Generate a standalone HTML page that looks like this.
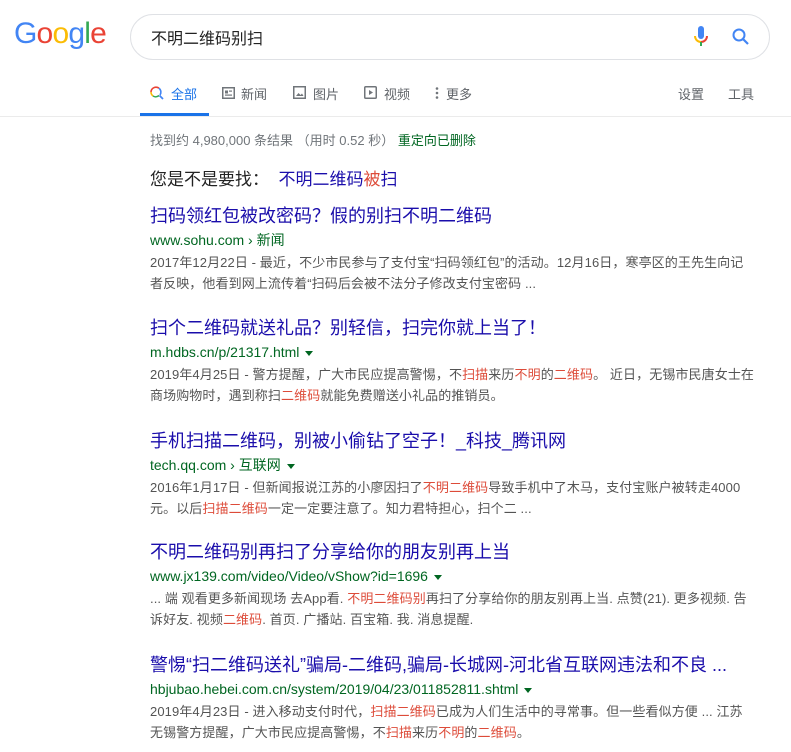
<!DOCTYPE html>
<html><head><meta charset="utf-8"><style>
body{margin:0;width:791px;height:752px;overflow:hidden;background:#fff;font-family:"Liberation Sans","Noto Sans CJK SC",sans-serif;position:relative}
.a{position:absolute;white-space:nowrap}
.logo{left:14px;top:17px;font-size:30px;letter-spacing:-0.8px;font-family:"Liberation Sans",sans-serif}
.box{position:absolute;left:130px;top:14px;width:638px;height:44px;border:1px solid #dfe1e5;border-radius:24px}
.nav{top:84px;font-size:13px;color:#5f6368}
.r{position:absolute;left:150px}
.t{font-size:18px;color:#1a0dab;line-height:22px}
.u{font-size:14px;color:#006621;line-height:20px;margin-top:3px}
.s{font-size:13px;color:#545454;line-height:21px;margin-top:2px;letter-spacing:0.1px}
em{font-style:normal;color:#dd4b39}
.tri{display:inline-block;width:0;height:0;border-left:4px solid transparent;border-right:4px solid transparent;border-top:5px solid #006621;margin-left:6px;vertical-align:middle}
</style></head><body>
<div class="a logo"><span style="color:#4285f4">G</span><span style="color:#ea4335">o</span><span style="color:#fbbc05">o</span><span style="color:#4285f4">g</span><span style="color:#34a853">l</span><span style="color:#ea4335">e</span></div>
<div class="box"></div>
<div class="a" style="left:151px;top:25px;font-size:16px;color:#222">不明二维码别扫</div>
<svg class="a" style="left:692px;top:25px" width="18" height="24" viewBox="0 0 18 24"><rect x="6" y="1" width="6" height="13" rx="3" fill="#4285f4"/><path d="M3 11a6 6 0 0 0 6 6" stroke="#fbbc05" stroke-width="2" fill="none"/><path d="M15 11a6 6 0 0 1-6 6" stroke="#ea4335" stroke-width="2" fill="none"/><rect x="8" y="17" width="2" height="4" fill="#34a853"/></svg>
<svg class="a" style="left:731px;top:27px" width="20" height="20" viewBox="0 0 20 20"><circle cx="8" cy="8" r="5.5" stroke="#4285f4" stroke-width="2" fill="none"/><path d="M12 12l5 5" stroke="#4285f4" stroke-width="2.2"/></svg>
<svg class="a" style="left:150px;top:86px" width="14" height="14" viewBox="0 0 14 14"><path d="M9 2.2A5 5 0 0 0 1 6" stroke="#ea4335" stroke-width="1.6" fill="none"/><path d="M1 6a5 5 0 0 0 2 4" stroke="#fbbc05" stroke-width="1.6" fill="none"/><path d="M3 10a5 5 0 0 0 6-0.5" stroke="#34a853" stroke-width="1.6" fill="none"/><path d="M9 2.2A5 5 0 0 1 10 9" stroke="#4285f4" stroke-width="1.6" fill="none"/><path d="M9.5 9.5l3.5 3.5" stroke="#4285f4" stroke-width="1.8"/></svg>
<div class="a nav" style="left:171px;color:#1a73e8">全部</div>
<div style="position:absolute;left:140px;top:113px;width:69px;height:3px;background:#1a73e8"></div>
<svg class="a" style="left:222px;top:87px" width="13" height="12"><rect x="0.75" y="0.75" width="11.5" height="10.5" fill="none" stroke="#70757a" stroke-width="1.5"/><rect x="3" y="3.5" width="3" height="3" fill="#70757a"/><rect x="7" y="3.5" width="3" height="1.2" fill="#70757a"/><rect x="3" y="7.5" width="7" height="1.2" fill="#70757a"/></svg>
<div class="a nav" style="left:241px">新闻</div>
<svg class="a" style="left:293px;top:86px" width="13" height="13"><rect x="0.75" y="0.75" width="11.5" height="11.5" fill="none" stroke="#70757a" stroke-width="1.5"/><path d="M3 10l2.5-3 2 2 1.5-1.5 1.5 2.5z" fill="#70757a"/></svg>
<div class="a nav" style="left:313px">图片</div>
<svg class="a" style="left:364px;top:86px" width="13" height="13"><rect x="0.75" y="0.75" width="11.5" height="11.5" fill="none" stroke="#70757a" stroke-width="1.5" rx="1"/><path d="M5 4l4 2.5-4 2.5z" fill="#70757a"/></svg>
<div class="a nav" style="left:384px">视频</div>
<svg class="a" style="left:435px;top:87px" width="4" height="12"><circle cx="2" cy="1.5" r="1.3" fill="#70757a"/><circle cx="2" cy="6" r="1.3" fill="#70757a"/><circle cx="2" cy="10.5" r="1.3" fill="#70757a"/></svg>
<div class="a nav" style="left:446px">更多</div>
<div class="a nav" style="left:678px">设置</div>
<div class="a nav" style="left:728px">工具</div>
<div style="position:absolute;left:0;top:116px;width:791px;height:1px;background:#ebebeb"></div>
<div class="a" style="left:150px;top:130px;font-size:13px;color:#70757a">找到约 4,980,000 条结果 （用时 0.52 秒） <span style="color:#006621">重定向已删除</span></div>
<div class="a" style="left:150px;top:165px;font-size:17px;color:#222">您是不是要找：&nbsp;&nbsp;<span style="color:#1a0dab">不明二维码<em style="color:#dd4b39">被</em>扫</span></div>

<div class="r" style="top:205px"><div class="t">扫码领红包被改密码？假的别扫不明二维码</div><div class="u">www.sohu.com › 新闻</div><div class="s">2017年12月22日 - 最近，不少市民参与了支付宝“扫码领红包”的活动。12月16日，寒亭区的王先生向记<br>者反映，他看到网上流传着“扫码后会被不法分子修改支付宝密码 ...</div></div>

<div class="r" style="top:317px"><div class="t">扫个二维码就送礼品？别轻信，扫完你就上当了！</div><div class="u">m.hdbs.cn/p/21317.html<span class="tri"></span></div><div class="s">2019年4月25日 - 警方提醒，广大市民应提高警惕，不<em>扫描</em>来历<em>不明</em>的<em>二维码</em>。 近日，无锡市民唐女士在<br>商场购物时，遇到称扫<em>二维码</em>就能免费赠送小礼品的推销员。</div></div>

<div class="r" style="top:430px"><div class="t">手机扫描二维码，别被小偷钻了空子！_科技_腾讯网</div><div class="u">tech.qq.com › 互联网<span class="tri"></span></div><div class="s">2016年1月17日 - 但新闻报说江苏的小廖因扫了<em>不明二维码</em>导致手机中了木马，支付宝账户被转走4000<br>元。以后<em>扫描二维码</em>一定一定要注意了。知力君特担心，扫个二 ...</div></div>

<div class="r" style="top:541px"><div class="t">不明二维码别再扫了分享给你的朋友别再上当</div><div class="u">www.jx139.com/video/Video/vShow?id=1696<span class="tri"></span></div><div class="s">... 端 观看更多新闻现场 去App看. <em>不明二维码别</em>再扫了分享给你的朋友别再上当. 点赞(21). 更多视频. 告<br>诉好友. 视频<em>二维码</em>. 首页. 广播站. 百宝箱. 我. 消息提醒.</div></div>

<div class="r" style="top:654px"><div class="t">警惕“扫二维码送礼”骗局-二维码,骗局-长城网-河北省互联网违法和不良 ...</div><div class="u">hbjubao.hebei.com.cn/system/2019/04/23/011852811.shtml<span class="tri"></span></div><div class="s">2019年4月23日 - 进入移动支付时代，<em>扫描二维码</em>已成为人们生活中的寻常事。但一些看似方便 ... 江苏<br>无锡警方提醒，广大市民应提高警惕，不<em>扫描</em>来历<em>不明</em>的<em>二维码</em>。</div></div>
</body></html>
